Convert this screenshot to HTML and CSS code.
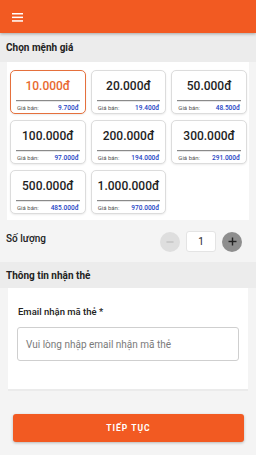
FILE: index.html
```html
<!DOCTYPE html>
<html lang="vi">
<head>
<meta charset="utf-8">
<title>Chọn mệnh giá</title>
<link rel="stylesheet" href="styles.css">
</head>
<body>
<header class="topbar">
  <svg class="menu" width="11" height="9" viewBox="0 0 11 9"><rect x="0" y="0" width="11" height="1.5" fill="#fff"/><rect x="0" y="3.6" width="11" height="1.5" fill="#fff"/><rect x="0" y="7.2" width="11" height="1.5" fill="#fff"/></svg>
</header>

<div class="section-title first">Chọn mệnh giá</div>

<div class="panel denoms">
  <div class="grid">
    <div class="card selected"><div class="amount">10.000đ</div><div class="divider"></div><div class="price"><span class="lbl">Giá bán:</span><span class="val">9.700đ</span></div></div>
    <div class="card"><div class="amount">20.000đ</div><div class="divider"></div><div class="price"><span class="lbl">Giá bán:</span><span class="val">19.400đ</span></div></div>
    <div class="card"><div class="amount">50.000đ</div><div class="divider"></div><div class="price"><span class="lbl">Giá bán:</span><span class="val">48.500đ</span></div></div>
    <div class="card"><div class="amount">100.000đ</div><div class="divider"></div><div class="price"><span class="lbl">Giá bán:</span><span class="val">97.000đ</span></div></div>
    <div class="card"><div class="amount">200.000đ</div><div class="divider"></div><div class="price"><span class="lbl">Giá bán:</span><span class="val">194.000đ</span></div></div>
    <div class="card"><div class="amount">300.000đ</div><div class="divider"></div><div class="price"><span class="lbl">Giá bán:</span><span class="val">291.000đ</span></div></div>
    <div class="card"><div class="amount">500.000đ</div><div class="divider"></div><div class="price"><span class="lbl">Giá bán:</span><span class="val">485.000đ</span></div></div>
    <div class="card"><div class="amount">1.000.000đ</div><div class="divider"></div><div class="price"><span class="lbl">Giá bán:</span><span class="val">970.000đ</span></div></div>
  </div>
</div>

<div class="qty-row">
  <span class="qty-label">Số lượng</span>
  <div class="qty-ctrl">
    <span class="circle minus"><svg width="8" height="8" viewBox="0 0 8 8"><rect x="0.5" y="3.5" width="7" height="1" fill="#b5b5b5"/></svg></span>
    <span class="qty-box">1</span>
    <span class="circle plus"><svg width="9" height="9" viewBox="0 0 9 9"><rect x="0.5" y="3.8" width="8" height="1.4" fill="#222"/><rect x="3.8" y="0.5" width="1.4" height="8" fill="#222"/></svg></span>
  </div>
</div>

<div class="section-title second">Thông tin nhận thẻ</div>

<div class="panel form">
  <div class="field-label">Email nhận mã thẻ *</div>
  <div class="input">Vui lòng nhập email nhận mã thẻ</div>
</div>

<div class="actions">
  <button class="btn">TIẾP TỤC</button>
</div>
</body>
</html>
```

FILE: styles.css
```css
* { box-sizing: border-box; }
html, body { margin: 0; padding: 0; }
body {
  width: 256px;
  height: 455px;
  overflow: hidden;
  background: #f4f4f4;
  font-family: Roboto, "Noto Sans", "Liberation Sans", sans-serif;
  color: #222;
}
.topbar {
  height: 33px;
  background: #f25a22;
  display: flex;
  align-items: center;
  padding-left: 12px;
  box-shadow: 0 1px 3px rgba(0,0,0,0.3);
  position: relative;
  z-index: 1;
}
.menu { display: block; margin-top: 1px; }
.section-title {
  background: #ececec;
  font-weight: 700;
  font-size: 10px;
  padding-left: 6px;
  display: flex;
  align-items: center;
}
.section-title.first { height: 29px; }
.section-title.second { height: 26px; }
.panel { background: #fff; }
.denoms {
  margin: 0 7px;
  padding: 8px 2px 6px 3px;
}
.grid {
  display: grid;
  grid-template-columns: repeat(3, 1fr);
  column-gap: 5px;
  row-gap: 6px;
}
.card {
  height: 44px;
  border: 1px solid #dcdcdc;
  border-radius: 5px;
  box-shadow: 0 1px 2px rgba(0,0,0,0.08);
  padding: 7px 5px 0;
  background: #fff;
}
.card.selected {
  border: 1.5px solid #e5703d;
}
.amount {
  text-align: center;
  font-size: 12px;
  line-height: 16px;
  font-weight: 500;
  color: #1e1e1e;
}
.selected .amount { color: #e8692f; }
.divider {
  margin-top: 6px;
  height: 1px;
  background: #8a8a8a;
  box-shadow: 0 1px 0 #e6e6e6;
}
.price {
  display: flex;
  justify-content: space-between;
  align-items: center;
  height: 11px;
  margin-top: 1px;
  padding: 0 1px;
}
.lbl { font-size: 6px; color: #555; }
.val { font-size: 6.5px; color: #2342c4; font-weight: 500; }
.qty-row {
  height: 42px;
  display: flex;
  align-items: center;
  justify-content: space-between;
  padding: 0 14px 0 6px;
}
.qty-label { font-size: 10px; color: #222; font-weight: 500; margin-top: -6px; }
.qty-ctrl { display: flex; align-items: center; gap: 6px; margin-top: 1px; }
.circle {
  width: 20px;
  height: 20px;
  border-radius: 50%;
  display: flex;
  align-items: center;
  justify-content: center;
}
.minus { background: #dedede; }
.plus { background: #8e8e8e; }
.qty-box {
  width: 30px;
  height: 21px;
  border: 1px solid #e4e4e4;
  border-radius: 3px;
  background: #fff;
  display: flex;
  align-items: center;
  justify-content: center;
  font-size: 10px;
  color: #222;
}
.form {
  margin: 0 8px;
  padding: 17px 9px 28px;
  border-bottom: 2px solid #ebebeb;
}
.field-label {
  font-size: 9.5px;
  font-weight: 500;
  color: #222;
  line-height: 14px;
  margin-left: 1px;
}
.input {
  margin-top: 8px;
  height: 34px;
  border: 1px solid #cfcfcf;
  border-radius: 3px;
  display: flex;
  align-items: center;
  padding-left: 8px;
  font-size: 10px;
  color: #7a7a7a;
}
.actions { padding: 23px 12px 0 13px; }
.btn {
  width: 100%;
  height: 28px;
  border: none;
  border-radius: 3px;
  background: #f25a22;
  color: #fff;
  font-family: Roboto, "Noto Sans", sans-serif;
  font-weight: 700;
  font-size: 8.5px;
  letter-spacing: 1px;
  box-shadow: 0 1px 3px rgba(0,0,0,0.25);
}
```
